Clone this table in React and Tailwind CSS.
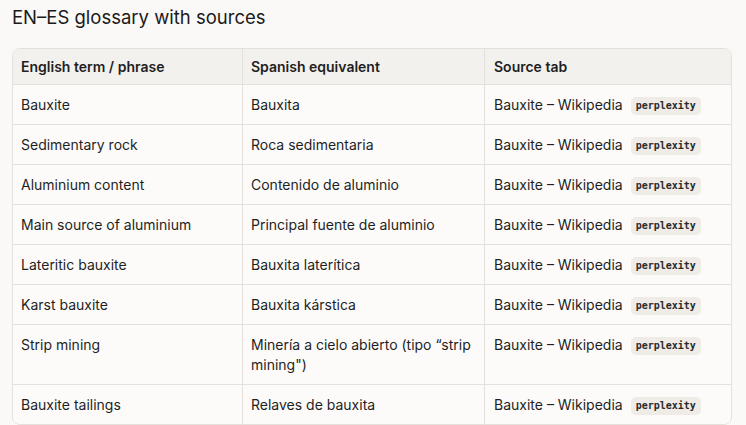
import React from 'react';

const rows = [
  ['Bauxite', 'Bauxita'],
  ['Sedimentary rock', 'Roca sedimentaria'],
  ['Aluminium content', 'Contenido de aluminio'],
  ['Main source of aluminium', 'Principal fuente de aluminio'],
  ['Lateritic bauxite', 'Bauxita laterítica'],
  ['Karst bauxite', 'Bauxita kárstica'],
  ['Strip mining', 'Minería a cielo abierto (tipo “strip mining")'],
  ['Bauxite tailings', 'Relaves de bauxita'],
];

function Badge() {
  return (
    <span className="ml-2 inline-flex h-[18px] items-center rounded-[5px] bg-[#efece8] px-[5px] align-[1px] font-['DejaVu_Sans_Mono',monospace] text-[10px] font-semibold leading-none text-[#2a2a2a]">
      perplexity
    </span>
  );
}

export default function App() {
  return (
    <div className="min-h-screen bg-[#faf9f7] px-3 pt-[5px] font-['Inter',sans-serif] text-[#1f1f1f]">
      <h2 className="text-[18.5px] leading-6 text-[#1a1a1a]">EN–ES glossary with sources</h2>

      {/* glossary table */}
      <div className="mt-[19px] w-[720px] overflow-hidden rounded-lg border border-[#e4e1dc]">
        <table className="w-full border-separate border-spacing-0 text-[14px] leading-5">
          <thead>
            <tr className="bg-[#f3f1ee]">
              <th className="h-[36px] w-[230px] border-b border-r border-[#e4e1dc] px-2 text-left align-middle font-semibold">English term / phrase</th>
              <th className="w-[242px] border-b border-r border-[#e4e1dc] px-2 text-left align-middle font-semibold">Spanish equivalent</th>
              <th className="border-b border-[#e4e1dc] px-[9px] text-left align-middle font-semibold">Source tab</th>
            </tr>
          </thead>
          <tbody className="bg-[#fcfbfa]">
            {rows.map(([en, es], i) => {
              const last = i === rows.length - 1;
              const b = last ? '' : 'border-b';
              return (
                <tr key={en}>
                  <td className={`${b} border-r border-[#e4e1dc] px-2 py-[9.5px] align-top`}>{en}</td>
                  <td className={`${b} border-r border-[#e4e1dc] px-2 py-[9.5px] align-top`}>{es}</td>
                  <td className={`${b} border-[#e4e1dc] px-[9px] py-[9.5px] align-top whitespace-nowrap`}>
                    Bauxite – Wikipedia
                    <Badge />
                  </td>
                </tr>
              );
            })}
          </tbody>
        </table>
      </div>
    </div>
  );
}
